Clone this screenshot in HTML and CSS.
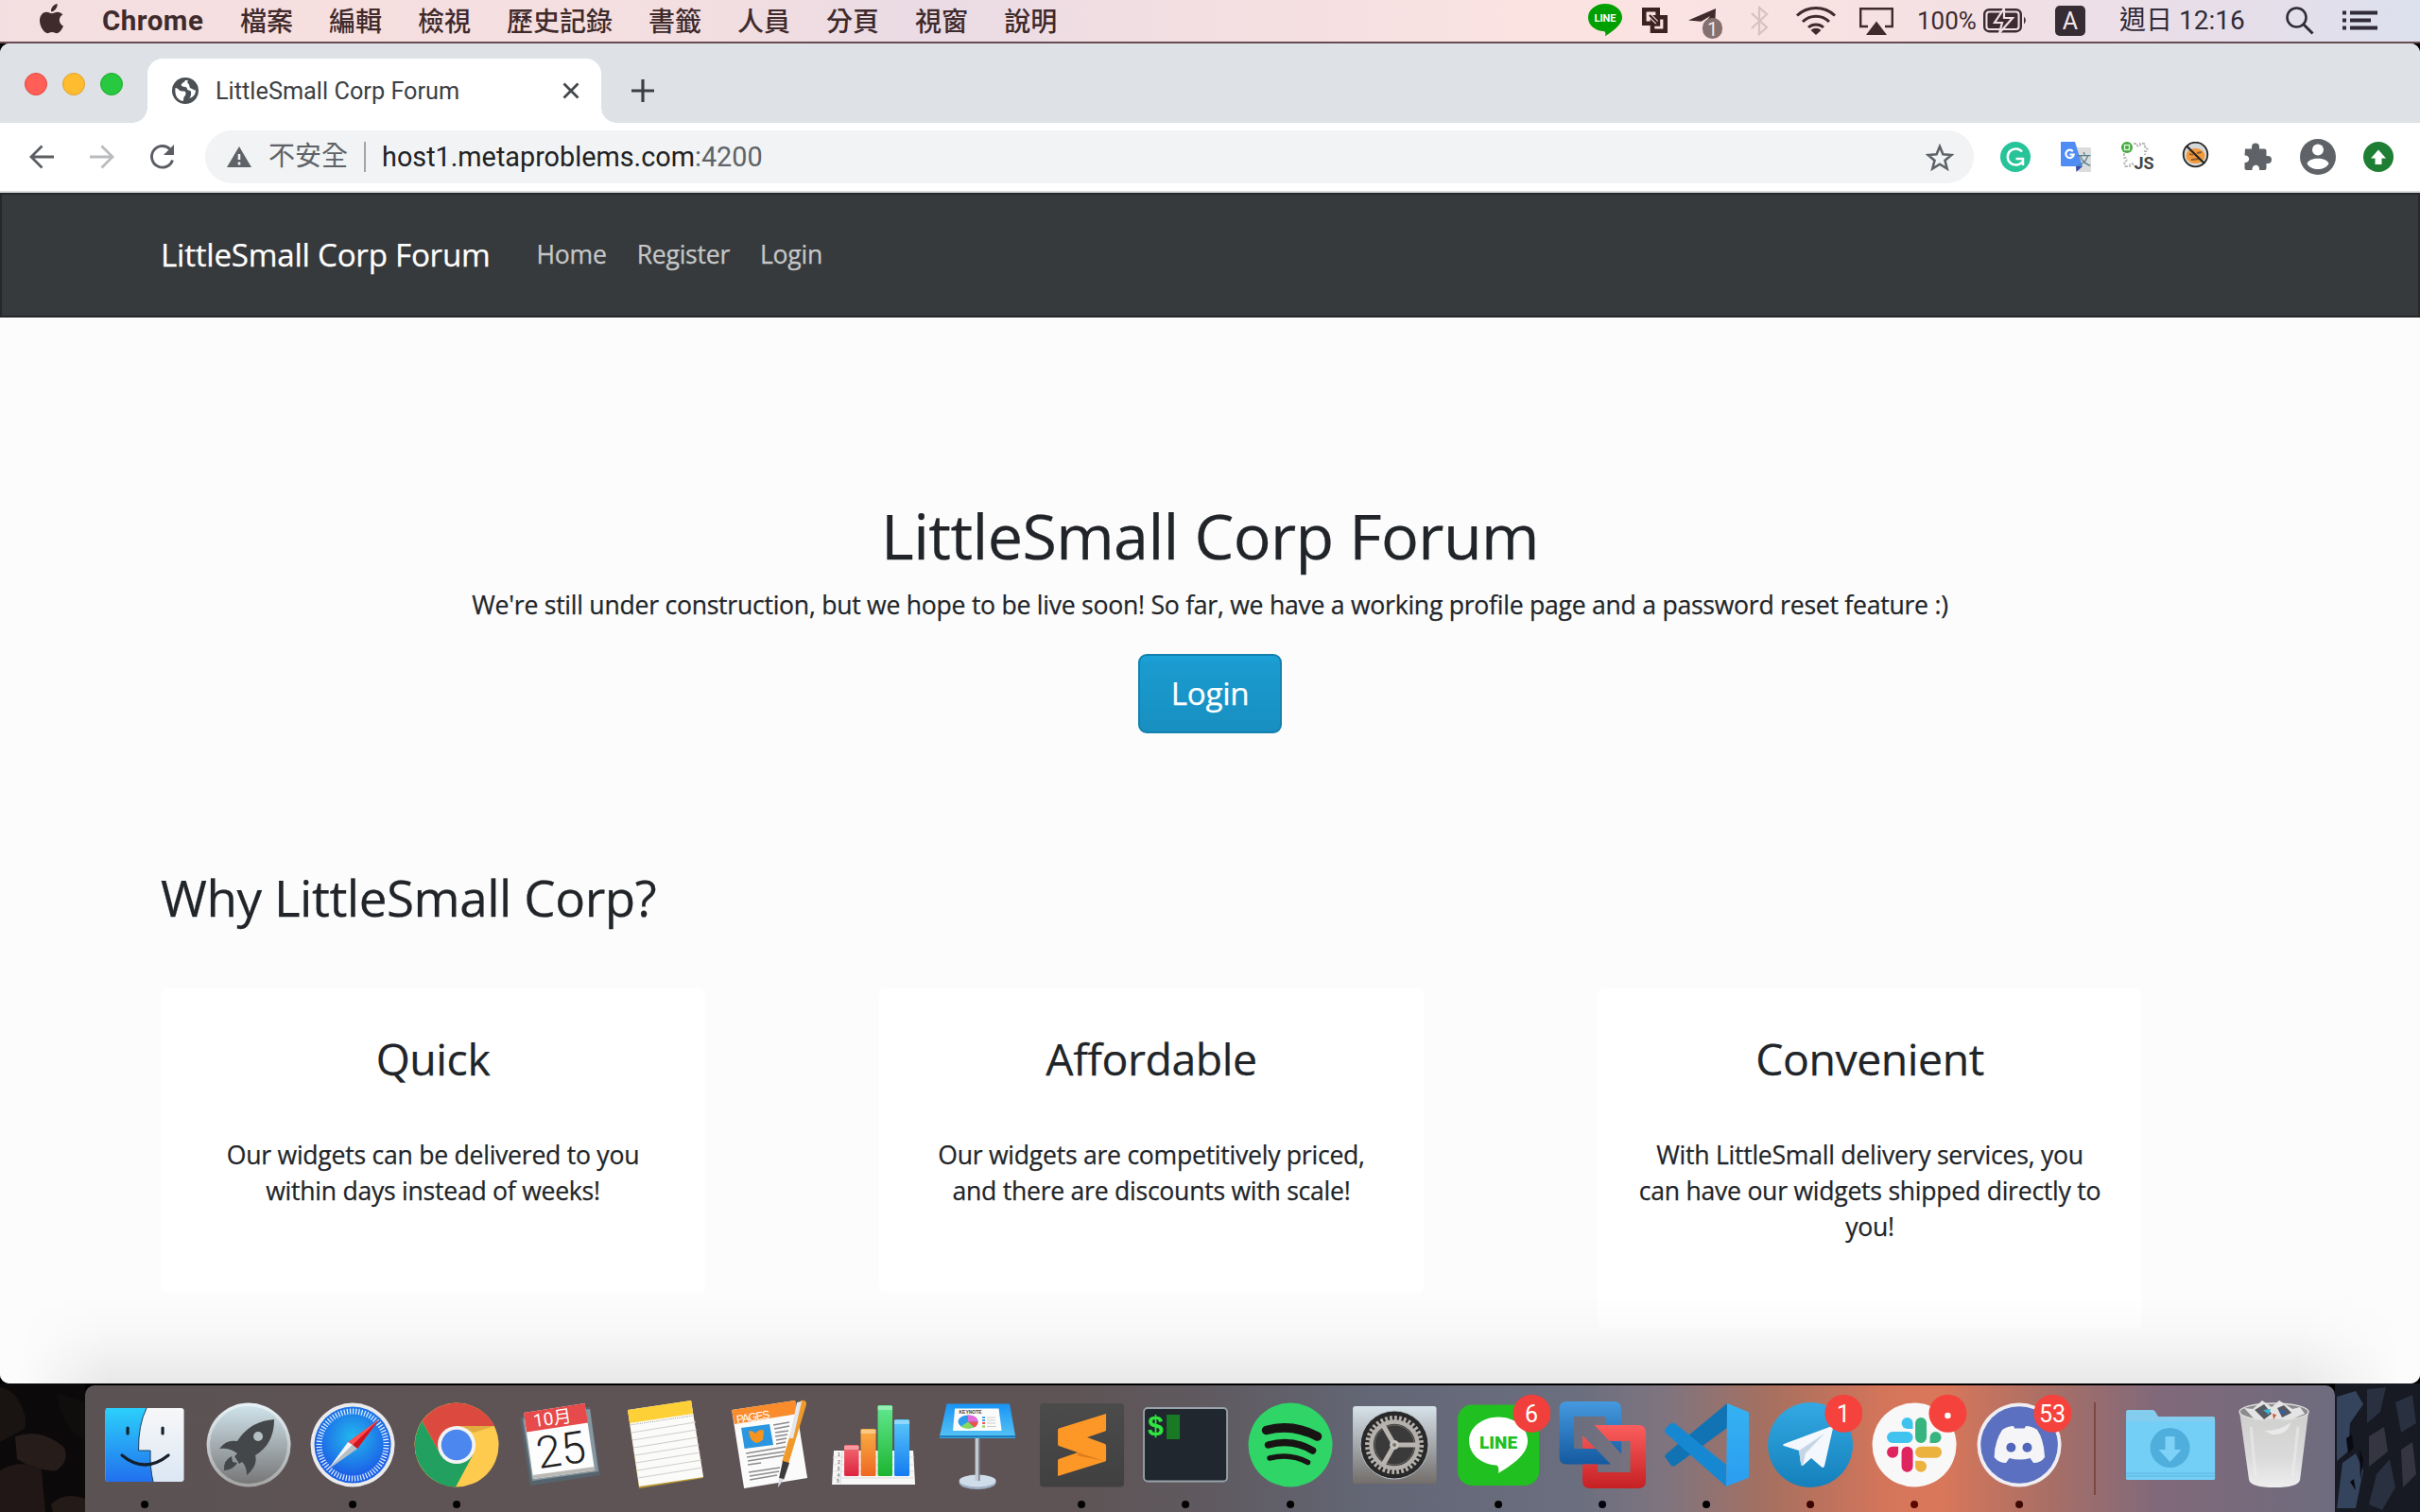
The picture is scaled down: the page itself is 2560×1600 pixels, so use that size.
FILE: index.html
```html
<!DOCTYPE html>
<html lang="zh-Hant">
<head>
<meta charset="utf-8">
<title>LittleSmall Corp Forum</title>
<link rel="stylesheet" href="styles.css">
</head>
<body>
<div class="desktop">

  <header class="menubar">
    <nav class="menus">
      <svg class="apple" width="28" height="34" viewBox="0 0 28 34"><path d="M19.6 1c.3 2.600-.7 4.500-2 6-1.400 1.500-3 2.400-4.600 2.300-.2-2.300.7-4.300 2-5.700C16.300 2.100 18.200 1.200 19.600 1zM26 24.500c-1.500 3.900-4.200 7.700-7 7.700-1.900 0-2.700-1.100-4.900-1.100-2.300 0-3.200 1.100-4.900 1.100C6.200 32.200 1 25.600 1 18.800c0-5.600 3.500-9 7.300-9 2.200 0 3.900 1.400 5.600 1.400 1.600 0 3.400-1.500 6.100-1.500 1.800 0 4 .9 5.300 2.900-5 3-4.300 9.800.7 11.900z" fill="#3f2a2c"/></svg>
      <b class="app">Chrome</b>
      <span>檔案</span><span>編輯</span><span>檢視</span><span>歷史記錄</span><span>書籤</span><span>人員</span><span>分頁</span><span>視窗</span><span>說明</span>
    </nav>
    <div class="status">
      <svg class="s-line" width="36" height="36" viewBox="0 0 36 36"><path d="M18 0c10 0 18 6.300 18 14.500 0 6-6 12-18 19.700.6-2.500.6-4-.8-5C7.500 28.700 0 23 0 14.500 0 6.300 8 0 18 0z" fill="#00a000"/><text x="18" y="18.500" class="line-sm">LINE</text></svg>
      <svg class="s-vm" width="30" height="32" viewBox="0 0 30 32"><path d="M3.300 4.300h14.400v14.400H3.300zM12 12.300h13.700v14.400H12z" fill="none" stroke="#3c2220" stroke-width="4.600"/><path d="M7 8l14 14" stroke="#fae3e1" stroke-width="4.500"/><path d="M9 10l10 10m0-7v7.500h-7.500" fill="none" stroke="#3c2220" stroke-width="2.400"/></svg>
      <svg class="s-tg" width="38" height="36" viewBox="0 0 38 36"><path d="M0 14.500L29 2l-1 20-12-6z" fill="#3f2a2c"/><path d="M10 18l13-8-9 12z" fill="#fae3e1"/><rect x="15" y="12" width="21" height="22" rx="10" fill="#857070"/><text x="25.500" y="30.500" class="one">1</text></svg>
      <svg class="s-bt" width="20" height="32" viewBox="0 0 20 32"><path d="M1 8l16 15-8 7V2l8 7L1 24" fill="none" stroke="#d9c1c2" stroke-width="2.200"/></svg>
      <svg class="s-wifi" width="44" height="32" viewBox="0 0 44 32"><g fill="none" stroke="#3f2a2c" stroke-width="3"><path d="M2 10.500a29 29 0 0 1 40 0"/><path d="M8 17a20 20 0 0 1 28 0"/><path d="M14 23a12 12 0 0 1 16 0"/></g><path d="M22 31l-5.500-5a8 8 0 0 1 11 0z" fill="#3f2a2c"/></svg>
      <svg class="s-air" width="36" height="30" viewBox="0 0 36 30"><path d="M9 20H1.200V1.200h33.600V20H27" fill="none" stroke="#3f2a2c" stroke-width="2.400"/><path d="M18 14.500L29 29H7z" fill="#3f2a2c"/></svg>
      <span class="pct">100%</span>
      <svg class="s-bat" width="48" height="26" viewBox="0 0 48 26"><rect x="1.200" y="1.200" width="38.600" height="23" rx="5" fill="none" stroke="#3c2b30" stroke-width="2.400"/><rect x="4.500" y="4.500" width="32" height="16.500" rx="2" fill="#3c2b30"/><path d="M43 8.500q3.500 4 0 8z" fill="#3c2b30"/><path d="M22 0L12 15h8l-3 11L31 10h-9z" fill="#3c2b30" stroke="#f1dfe3" stroke-width="2.200"/></svg>
      <span class="ime">A</span>
      <span class="clock">週日&nbsp;12:16</span>
      <svg class="s-find" width="30" height="30" viewBox="0 0 30 30"><circle cx="11.500" cy="11.500" r="10" fill="none" stroke="#302b38" stroke-width="2.600"/><path d="M18.500 18.500l10 10" stroke="#302b38" stroke-width="3"/></svg>
      <svg class="s-list" width="38" height="22" viewBox="0 0 38 22"><path d="M0 2.500h4M8 2.500h29M0 10.500h4M8 10.500h22M0 18.500h4M8 18.500h29" stroke="#302b38" stroke-width="4"/></svg>
    </div>
  </header>

  <main class="window">
    <div class="tabstrip">
      <div class="lights"><i class="red"></i><i class="amber"></i><i class="green"></i></div>
      <div class="tab">
        <svg width="28" height="28" viewBox="0 0 28 28"><circle cx="14" cy="14" r="14" fill="#4b5055"/><path d="M3.500 11c3 0 4 3.500 7 3.500s4 0 4 2.500-1.500 2.500-2 4 0 2.500-1 4C6 24 2.500 19 3.500 11zM14 3c-1 2.500-3 2-4 4s1.500 3 4 3 1 3 3.500 3.500 3 1.500 2.500 4.500-1 3-2 4c5-1 7-5 7-8.500-2.500 0-3-1.500-5-2s-1-3-2.500-4.500S16 4.500 17 3z" fill="#fff"/></svg>
        <span class="tab-title">LittleSmall Corp Forum</span>
        <svg width="18" height="18" viewBox="0 0 18 18"><path d="M1.500 1.500l15 15m0-15l-15 15" stroke="#43474b" stroke-width="2.800"/></svg>
      </div>
      <svg class="newtab" width="26" height="26" viewBox="0 0 26 26"><path d="M13 1v24M1 13h24" stroke="#3c4043" stroke-width="3.200"/></svg>
    </div>

    <div class="toolbar">
      <svg class="nav-ico" width="28" height="28" viewBox="0 0 28 28"><path d="M27 14H4M14.500 2.500L3 14l11.500 11.500" fill="none" stroke="#5a5e63" stroke-width="2.800"/></svg>
      <svg class="nav-ico" width="28" height="28" viewBox="0 0 28 28"><path d="M1 14h23M13.500 2.500L25 14 13.500 25.500" fill="none" stroke="#babcbe" stroke-width="2.800"/></svg>
      <svg class="nav-ico" width="28" height="28" viewBox="0 0 28 28"><path d="M24.500 17.500A11.300 11.300 0 1 1 22 6" fill="none" stroke="#5a5e63" stroke-width="2.900"/><path d="M26 1v11H15z" fill="#5a5e63"/></svg>
      <div class="omnibox">
        <svg width="26" height="22" viewBox="0 0 26 22"><path d="M13 0l13 22H0z" fill="#5f6368"/><path d="M13 8v6m0 2.500v3" stroke="#f1f3f4" stroke-width="2.600"/></svg>
        <span class="insecure">不安全</span>
        <span class="rule"></span>
        <span class="url">host1.metaproblems.com<em>:4200</em></span>
        <svg class="star" width="30" height="29" viewBox="0 0 30 29"><path d="M15 3l3.400 8.300 9 .7-6.900 5.800 2.200 8.700L15 21.700 7.300 26.500l2.200-8.700L2.600 12l9-.7z" fill="none" stroke="#5f6368" stroke-width="2.600"/></svg>
      </div>
      <div class="exts">
        <svg width="32" height="32" viewBox="0 0 32 32"><circle cx="16" cy="16" r="16" fill="#27c399"/><path d="M23 10.500a8.600 8.600 0 1 0 0 11M16.500 18H24v7" fill="none" stroke="#fff" stroke-width="2.500"/></svg>
        <svg width="32" height="32" viewBox="0 0 32 32"><path d="M10 6h21q1 0 1 1v24q0 1-1 1H19z" fill="#dcdcdc"/><path d="M16 26h7l-6.500 6z" fill="#3749ab"/><path d="M1 0h14l8 26H1q-1 0-1-1V1q0-1 1-1z" fill="#4f8df5"/><path d="M12.800 10.200a4.200 4.200 0 1 0 .9 3.300H9.500" fill="none" stroke="#fff" stroke-width="2.200"/><text x="24.500" y="24" class="wen">文</text></svg>
        <svg width="32" height="32" viewBox="0 0 32 32"><path d="M13 2h4c-1 4 4 4 3 0h5v5c4-1 4 4 0 3v4M3 12v5c4-1 4 4 0 4l1 5h5c-1-4 4-4 4 0" fill="none" stroke="#b8b8b8" stroke-width="1.800" stroke-dasharray="3 1.500"/><circle cx="6" cy="6" r="6" fill="#43a63c"/><rect x="3.500" y="3.500" width="5" height="5" fill="none" stroke="#d7f5d3" stroke-width="1.500"/><text x="24" y="29" class="js">JS</text></svg>
        <svg width="32" height="32" viewBox="0 0 32 32"><circle cx="14.500" cy="13.500" r="12.800" fill="#d5d7d8" stroke="#222" stroke-width="1.800"/><ellipse cx="14.500" cy="15" rx="10" ry="8" fill="#f39a3c"/><path d="M8 13l4 1M16 12l5-1M10 19l9-1" stroke="#8d5f30" stroke-width="1.800"/><path d="M5 4.500l19 18.500" stroke="#222" stroke-width="2.200"/></svg>
        <svg width="32" height="32" viewBox="0 0 32 32"><path d="M3 7.500h7V5.500a4 4 0 0 1 8 0v2h5.500q2 0 2 2V15h1.500a4 4 0 0 1 0 8h-1.500v5q0 2-2 2H18c1-7-8-7-7.500 0H4.500q-2 0-2-2v-6c6 .5 6.500-8 0-7.500z" fill="#5f6368"/></svg>
        <svg width="38" height="38" viewBox="0 0 38 38"><circle cx="19" cy="19" r="19" fill="#5f6368"/><circle cx="19" cy="11.500" r="6" fill="#fff"/><path d="M7.500 26c2.500-7 20.500-7 23 0-4 8-19 8-23 0z" fill="#fff"/></svg>
        <svg width="32" height="32" viewBox="0 0 32 32"><circle cx="16" cy="16" r="16" fill="#1e7e34"/><path d="M16 8.500l8 9h-4.500V24h-7v-6.500H8z" fill="#fff"/></svg>
      </div>
    </div>

    <div class="page">
      <nav class="navbar"><a class="brand">LittleSmall Corp Forum</a><a>Home</a><a>Register</a><a>Login</a></nav>
      <section class="hero">
        <h1>LittleSmall Corp Forum</h1>
        <p>We're still under construction, but we hope to be live soon! So far, we have a working profile page and a password reset feature :)</p>
        <a class="btn">Login</a>
      </section>
      <section class="why">
        <h2>Why LittleSmall Corp?</h2>
        <div class="cards">
          <article class="card"><h3>Quick</h3><p>Our widgets can be delivered to you within days instead of weeks!</p></article>
          <article class="card"><h3>Affordable</h3><p>Our widgets are competitively priced, and there are discounts with scale!</p></article>
          <article class="card"><h3>Convenient</h3><p>With LittleSmall delivery services, you can have our widgets shipped directly to you!</p></article>
        </div>
      </section>
      <div class="dock-shade"></div>
    </div>
  </main>

  <footer class="shelf">
    <svg class="rocks" width="90" height="136" viewBox="0 0 90 136"><rect width="90" height="136" fill="#0b0909"/><path d="M0 4q14 2 22 18t4 26L0 62z" fill="#191312"/><path d="M16 56q28-10 52 12 6 14-8 24-20 2-42-12z" fill="#261c19"/><path d="M0 92q24-14 44 0l4 44H0z" fill="#201716"/><path d="M54 128q14-14 36-6v14H56z" fill="#241a17"/><path d="M60 10l30 10v40q-24-10-30-50z" fill="#100d0d"/></svg>

    <div class="dock">
      <svg class="tile" viewBox="0 0 110 134">
        <defs><linearGradient id="fb" x1="0" y1="0" x2="0" y2="1"><stop offset="0" stop-color="#2bd0fb"/><stop offset="1" stop-color="#2270ee"/></linearGradient><linearGradient id="fw" x1="0" y1="0" x2="0" y2="1"><stop offset="0" stop-color="#f7f7f8"/><stop offset="1" stop-color="#dbe7f4"/></linearGradient></defs>
        <rect x="13.500" y="24" width="83" height="78" rx="3" fill="url(#fw)"/><path d="M16.500 24H57Q48 42 48.500 69H61Q60.500 88 64 102H16.500q-3 0-3-3V27q0-3 3-3z" fill="url(#fb)"/><path d="M57 24Q48 42 48.500 69H61Q60.500 88 64 102" fill="none" stroke="#1b3d60" stroke-width="1"/><path d="M37 45v6M74 45v6M31 74q24 20 49 0" fill="none" stroke="#14202c" stroke-width="3.200" stroke-linecap="round"/><circle cx="55" cy="126" r="4"/>
      </svg>
      <svg class="tile" viewBox="0 0 110 134">
        <defs><linearGradient id="lp" x1="0" y1="0" x2="0" y2="1"><stop offset="0" stop-color="#cfe2ea"/><stop offset="1" stop-color="#777"/></linearGradient><linearGradient id="lr" x1="0" y1="0" x2="0" y2="1"><stop offset="0" stop-color="#e8f4f8"/><stop offset="1" stop-color="#a3a3a3"/></linearGradient></defs>
        <circle cx="55" cy="63" r="44.500" fill="url(#lr)"/><circle cx="55" cy="63" r="41" fill="url(#lp)"/><path d="M82 36Q82 62 62 74q3 11-9 21 0-9-5-14l-3 2-5-8 3-3q-8-6-19-5 7-10 19-8Q56 38 82 36z" fill="#43474a"/><path d="M29 90q-1-11 8-15l1 6 5 1q-4 7-14 8z" fill="#43474a"/><circle cx="65" cy="54" r="5" fill="#b4c0c4"/>
      </svg>
      <svg class="tile" viewBox="0 0 110 134">
        <defs><radialGradient id="sf" cy=".4"><stop offset="0" stop-color="#22b9ee"/><stop offset="1" stop-color="#1c60e6"/></radialGradient></defs>
        <circle cx="55" cy="63" r="44.500" fill="#ebebeb"/><circle cx="55" cy="63" r="40.500" fill="url(#sf)"/><circle cx="55" cy="63" r="35.500" fill="none" stroke="#dff0ff" stroke-width="6" pathLength="144" stroke-dasharray=".8 1.200"/><path d="M83 36L50 60l5 3 5 4z" fill="#ff4e50"/><path d="M83 36L55 63l5 4z" fill="#cf1420"/><path d="M29 89L50 60l5 3z" fill="#f4f4f4"/><path d="M29 89l26-26 5 4z" fill="#b9bfc4"/><circle cx="55" cy="126" r="4"/>
      </svg>
      <svg class="tile" viewBox="0 0 110 134">
        <circle cx="55" cy="63" r="44.500" fill="#fecb4f"/><path d="M18.500 38A44.500 44.500 0 0 0 54 107.500L72.500 73 55 80 38 73z" fill="#22a05f"/><path d="M18.500 38A44.500 44.500 0 0 1 95 43H55L38 73z" fill="#dc4a3f"/><path d="M57 43h38l-22 7z" fill="#d5a03a" opacity=".7"/><circle cx="55" cy="63" r="20" fill="#f3f3f3"/><circle cx="55" cy="63" r="16.300" fill="#4b87ef"/><circle cx="55" cy="126" r="4"/>
      </svg>
      <svg class="tile" viewBox="0 0 110 134">
        <path d="M11 34l74-11 11 72-74 11z" fill="#56646d"/><path d="M14 35l71-10 9 66-70 10z" fill="#8797a0"/><path d="M15 29l64.500-10L90 90l-65 9z" fill="#fdfdfd"/><path d="M24.500 95L90 86v4l-65 9z" fill="#bbb9b5"/><path d="M15 29l64.500-10L83 39.500 18 49.500z" fill="#e64a4a"/><g transform="rotate(-8.500 50 60)"><text x="49" y="41" class="cal-m">10月</text><text x="53" y="85" class="cal-d">25</text></g>
      </svg>
      <svg class="tile" viewBox="0 0 110 134">
        <path d="M15 27l67-10 13 81-68 11z" fill="#b99a35"/><path d="M15 26l67-10 13 81-68 10z" fill="#fbfbf9"/><path d="M15 26l67-10 2 14-67 10z" fill="#fdd037"/><path d="M17 42l67-10" stroke="#999" stroke-dasharray="1 1.200"/><path d="M19 50l68-11M20 58l68-11M21 66l68-11M22.500 74l68-11M23.500 82l68-11M25 90l68-11M26 98l68-11" stroke="#cfcfcf" stroke-width="1.200"/>
      </svg>
      <svg class="tile" viewBox="0 0 110 134">
        <path d="M15 26l67-10 13 82-67 11z" fill="#fbfbfb"/><path d="M15 26l67-10 3 14-67 11z" fill="#fb8c2c"/><text x="37" y="37.500" transform="rotate(-9 37 33)" class="pages">PAGES</text><path d="M25 45l30-4 4 22-30.500 4z" fill="#2b96e0"/><path d="M33 48q5 0 7 3 5-6 9-3l-1 9q-3 4-7 4-7-2-8-13z" fill="#f7941e"/><path d="M59 42l17-3M60 46l16-3M61 50l14-2M61 54l13-2M62 58l11-2M62 62l10-2M30 72l42-7M31 76l40-6M32 80l38-6M32 84l14-2M33 92l33-5M34 96l31-5M34 100l29-5" stroke="#8c8c8c" stroke-width="1.300"/><path d="M88 16q6-1 6 4L75 83l-7-2z" fill="#f09a2c"/><path d="M84 18l5-1-9 39h-4z" fill="#e3e8ee"/><path d="M69 80l7 2-6 18-5-2z" fill="#3c3c3c"/><path d="M65 98l5 1-6 9z" fill="#d5dce2"/>
      </svg>
      <svg class="tile" viewBox="0 0 110 134">
        <defs><linearGradient id="n1" x1="0" y1="0" x2="0" y2="1"><stop offset="0" stop-color="#f46a72"/><stop offset="1" stop-color="#dc2440"/></linearGradient><linearGradient id="n2" x1="0" y1="0" x2="0" y2="1"><stop offset="0" stop-color="#f9b044"/><stop offset="1" stop-color="#ee6722"/></linearGradient><linearGradient id="n3" x1="0" y1="0" x2="0" y2="1"><stop offset="0" stop-color="#62e88f"/><stop offset="1" stop-color="#1cb531"/></linearGradient><linearGradient id="n4" x1="0" y1="0" x2="0" y2="1"><stop offset="0" stop-color="#5ac8fa"/><stop offset="1" stop-color="#137bf0"/></linearGradient></defs>
        <path d="M13 69h84l2 36H11z" fill="#f8f8f8"/><path d="M22 69l-2 36M12 76h86M12 84h86M12 91h86M11 98h88" stroke="#ddd" fill="none"/><g class="rows"><text x="17" y="75">1</text><text x="17" y="82.500">2</text><text x="16.500" y="90">3</text><text x="16.500" y="97">4</text><text x="16" y="103">5</text></g><rect x="24" y="63" width="15.500" height="33" rx="1.500" fill="url(#n1)"/><rect x="41.500" y="46" width="16" height="50" rx="1.500" fill="url(#n2)"/><rect x="59.500" y="21" width="15.500" height="75" rx="1.500" fill="url(#n3)"/><rect x="77" y="36" width="16" height="60" rx="1.500" fill="url(#n4)"/><path d="M24 66h15.500M41.500 49h16M59.500 24H75M77 39h16" stroke="#fff" stroke-opacity=".35" stroke-width="4"/>
      </svg>
      <svg class="tile" viewBox="0 0 110 134">
        <defs><linearGradient id="kn" x1="0" y1="0" x2="0" y2="1"><stop offset="0" stop-color="#1994f5"/><stop offset="1" stop-color="#58c5f5"/></linearGradient></defs>
        <ellipse cx="55" cy="103" rx="19.500" ry="7" fill="#9eafc0"/><ellipse cx="55" cy="101" rx="19.500" ry="6.500" fill="#cfdcea"/><path d="M52.500 55H57v46h-4.500z" fill="#c2c9d0"/><path d="M56 55h1.500v46H56z" fill="#77808a"/><path d="M22.500 19.500H89l6 34v2.500H15v-2.500z" fill="url(#kn)"/><path d="M15 53h80v2.500H15z" fill="#1d7fc0"/><path d="M31 24.500h46.500l3 23.500H29z" fill="#fbfbfb"/><text x="47.500" y="29.500" class="keynote">KEYNOTE</text><ellipse cx="45" cy="38.500" rx="10.500" ry="7" fill="#2d9bea"/><path d="M45 38.500V31.500q10 0 10.500 7z" fill="#e66ad6"/><path d="M45 38.500h10.500q0 4-4 6z" fill="#f05050"/><path d="M45 38.500l6.500 6q-8 3-14-1z" fill="#86d95d"/><path d="M60 34h3M60 37h3" stroke="#4aa3ee" stroke-width="2"/><path d="M60 40h3" stroke="#e55" stroke-width="2"/><path d="M60 43.500h3" stroke="#8c5" stroke-width="2"/><path d="M65 34h9M65 37h9M65 40h9M65 43.500h10" stroke="#ccc"/>
      </svg>
      <svg class="tile" viewBox="0 0 110 134">
        <defs><linearGradient id="sb" x1="0" y1="0" x2="0" y2="1"><stop offset="0" stop-color="#4b4b4b"/><stop offset="1" stop-color="#404040"/></linearGradient></defs>
        <rect x="11" y="19" width="89" height="88.500" rx="4" fill="url(#sb)"/><path d="M81 30L31 45.500q-1 .5-1 1.500V62q0 1.500 1 2l20 7-20 7q-1 .5-1 1.500V96l50-15.500q1-.5 1-1.500V64q0-1.500-1-2l-19-7 19-6.500q1-.5 1-1.500z" fill="#fd9827"/><path d="M51 71l28 9-28-5.500z" fill="#df7f1c"/><circle cx="55" cy="126" r="4"/>
      </svg>
      <svg class="tile" viewBox="0 0 110 134">
        <rect x="11" y="24" width="88" height="77.500" rx="4" fill="#20272e" stroke="#99a3ab" stroke-width="1.800"/><text x="23.500" y="53" class="dollar">$</text><rect x="35" y="31" width="14" height="26" fill="#187a24"/><circle cx="55" cy="126" r="4"/>
      </svg>
      <svg class="tile" viewBox="0 0 110 134">
        <circle cx="55" cy="63" r="44.500" fill="#2fd566"/><g fill="none" stroke="#191414" stroke-linecap="round"><path d="M29.500 47.500Q57 40 83.500 54" stroke-width="9.500"/><path d="M31.500 63Q57 56 78.500 69" stroke-width="7.500"/><path d="M33 77Q55 71.500 73.500 81.500" stroke-width="5.500"/></g><circle cx="55" cy="126" r="4"/>
      </svg>
      <svg class="tile" viewBox="0 0 110 134">
        <defs><linearGradient id="sp" x1="0" y1="0" x2="0" y2="1"><stop offset="0" stop-color="#d6e2ea"/><stop offset="1" stop-color="#736e6b"/></linearGradient></defs>
        <rect x="11" y="22" width="88.500" height="82" rx="3" fill="url(#sp)"/><circle cx="55" cy="63" r="36" fill="#282828" stroke="#b7c0c8"/><circle cx="55" cy="63" r="28.500" fill="none" stroke="#b4b0ac" stroke-width="5" pathLength="72" stroke-dasharray="1.100 .9"/><circle cx="55" cy="63" r="24.500" fill="#3a3a3a" stroke="#b4b0ac" stroke-width="4.500"/><circle cx="55" cy="63" r="21" fill="none" stroke="#6a6866"/><path d="M55 63h24M55 63L43 42M55 63L43 84" stroke="#b9b5b1" stroke-width="5"/><circle cx="55" cy="63" r="5" fill="#c6c2be"/><circle cx="55" cy="63" r="2" fill="#77736f"/>
      </svg>
      <svg class="tile" viewBox="0 0 110 134">
        <rect x="12" y="20.500" width="86" height="85.500" rx="15" fill="#20c020"/><path d="M55 33.500c17 0 31 11 31 25 0 13-12 23-31 34.500.8-4 0-7.500-2-8.500-17-1-29-12-29-26 0-14 14-25 31-25z" fill="#fff"/><text x="55" y="66.500" class="line-lg">LINE</text><circle cx="55" cy="126" r="4"/><circle cx="90.400" cy="29.700" r="20" fill="#f13f3b"/><text x="90" y="38.500" class="badge">6</text>
      </svg>
      <svg class="tile" viewBox="0 0 110 134">
        <defs><linearGradient id="vb" gradientUnits="userSpaceOnUse" x1="0" y1="17" x2="0" y2="84"><stop offset="0" stop-color="#4599de"/><stop offset="1" stop-color="#1459a0"/></linearGradient><linearGradient id="vr" gradientUnits="userSpaceOnUse" x1="0" y1="42" x2="0" y2="109"><stop offset="0" stop-color="#fb5e5e"/><stop offset="1" stop-color="#c62023"/></linearGradient></defs>
        <path d="M17.500 17H67q8 0 8 8v17H59v-9H25v34h23l16 16.500H17.500q-8 0-8-8V25q0-8 8-8zM62.500 59H75v13.500z" fill="url(#vb)"/><path d="M46.500 42H93q8 0 8 8v51q0 8-8 8H42q-8 0-8-8V83.500h16V92h34.500V59h-22zM34 53v14h14z" fill="url(#vr)"/><circle cx="55" cy="126" r="4" fill="#020212"/>
      </svg>
      <svg class="tile" viewBox="0 0 110 134">
        <defs><linearGradient id="vs" x1="0" y1="0" x2="0" y2="1"><stop offset="0" stop-color="#35b2f2"/><stop offset="1" stop-color="#2b9df0"/></linearGradient></defs>
        <path d="M77 19L12 73q-2 2 0 4l6 8q2 1.500 4 0l55-40z" fill="#1173b4"/><path d="M22 40.500q-3-1.500-5 0l-5 5q-2 3 0 5L76 107V84z" fill="#1688d2"/><path d="M77 19l22 9q1 .5 1 2v66q0 1.500-1 2l-23 9z" fill="url(#vs)"/><circle cx="55" cy="126" r="4"/>
      </svg>
      <svg class="tile" viewBox="0 0 110 134">
        <defs><linearGradient id="tg" x1="0" y1="0" x2="0" y2="1"><stop offset="0" stop-color="#33a9e3"/><stop offset="1" stop-color="#1480bb"/></linearGradient></defs>
        <circle cx="55" cy="63" r="45" fill="url(#tg)"/><path d="M27 62l51-19q1 0 1 2L70 85q-1 3-3 1.500L56 77l-9 8q-2 0-2-2l-2-14-16-5q-2-1 0-2z" fill="#f4f8fc"/><path d="M43 69l27-18-20 21-3 13q-2 0-2-2z" fill="#c4d6e6"/><circle cx="55" cy="126" r="4" fill="#3a0502"/><circle cx="90.400" cy="29.700" r="20" fill="#f6423c"/><text x="90" y="38.500" class="badge">1</text>
      </svg>
      <svg class="tile" viewBox="0 0 110 134">
        <circle cx="55" cy="63" r="44.500" fill="#f8f8f8"/><g fill="#40c4ef"><rect x="26" y="49" width="27.500" height="12" rx="6"/><path d="M53.500 46h-6a6 6 0 1 1 6-6z"/></g><g fill="#36b57f"><rect x="56" y="34" width="12" height="27" rx="6"/><path d="M71.500 61v-6a6 6 0 1 1 6 6z"/></g><g fill="#df2460"><rect x="41.500" y="64.700" width="12" height="27" rx="6"/><path d="M38 64.700v6a6 6 0 1 1-6-6z"/></g><g fill="#ecb23e"><rect x="56" y="64.700" width="28" height="12" rx="6"/><path d="M56 79.700h6a6 6 0 1 1-6 6z"/></g><circle cx="55" cy="126" r="4" fill="#5c0802"/><circle cx="90.400" cy="29.700" r="20" fill="#f6423c"/><circle cx="90.400" cy="32" r="3.200" fill="#fff"/>
      </svg>
      <svg class="tile" viewBox="0 0 110 134">
        <circle cx="55" cy="63" r="44.500" fill="#f0eef2"/><circle cx="55" cy="63" r="40.800" fill="#5b70c0"/><path d="M37 47q6-4 12-4l1 2.500h10.500L62 43q6 0 12 4 7 10 8 29-4 6-12 6l-3.500-5q-11 3-22 0L41 82q-8 0-12.500-6Q29 59 37 47z" fill="#f5f5f8"/><circle cx="46.300" cy="65.700" r="5" fill="#5167b9"/><circle cx="63.400" cy="65.700" r="5" fill="#5167b9"/><circle cx="55" cy="126" r="4" fill="#3d0804"/><circle cx="90.400" cy="29.700" r="20" fill="#f6423c"/><text x="90" y="38.500" class="badge">53</text>
      </svg>
      <div class="divider"></div>
      <svg class="tile" viewBox="0 0 110 134">
        <path d="M10 26h26q2 0 3 2l3 5h58q2 0 2 2v63q0 2-2 2H10q-2 0-2-2V28q0-2 2-2z" fill="#85cdee"/><path d="M8 38h94v60q0 2-2 2H10q-2 0-2-2z" fill="#74cff7"/><path d="M8 93h94M8 96h94" stroke="#5db4dc"/><circle cx="54.500" cy="66" r="21" fill="#4faedb"/><path d="M49.500 54h10v14h7L54.500 81l-12-13h7z" fill="#7ed2f8"/>
      </svg>
      <svg class="tile" viewBox="0 0 110 134">
        <defs><linearGradient id="tr" x1="0" y1="0" x2="0" y2="1"><stop offset="0" stop-color="#cfcfce"/><stop offset=".6" stop-color="#dadada"/><stop offset="1" stop-color="#eee"/></linearGradient></defs>
        <path d="M18 28h73l-9 72q-2 8-27 8t-27-8z" fill="url(#tr)"/><ellipse cx="54.500" cy="28" rx="36.500" ry="9" fill="#8b8b8e" stroke="#ddd" stroke-width="1.500"/><path d="M23 24l9 1 10-9 10 7 8-7 14 9 8-2 5 7-14 6H34z" fill="#e4e4e4"/><path d="M34 26l10-6 8 10-8 6zM58 24l7-3 8 8-10 5z" fill="#545a60"/><path d="M43 26l8-1-2 6z" fill="#3bb5d8"/><path d="M60 28l5-3 1 6z" fill="#2f61b0"/><path d="M53 30l4 1-3 5z" fill="#d2553c"/><path d="M44 48q18 0 28-9-3 14-20 13z" fill="#f2f2f2" opacity=".7"/><path d="M30 44l5 52M80 44l-6 52" stroke="#f1f1f1" stroke-width="3" opacity=".5"/>
      </svg>
    </div>

    <svg class="rocks" width="90" height="136" viewBox="0 0 90 136"><rect width="90" height="136" fill="#171923"/><path d="M2 14l20-6 8 14-14 20-2 30-12 10zM8 84l14-10 8 18-8 40H2z" fill="#34445d"/><path d="M34 6l20-2-6 26-14 12zM64 20l18-8 4 30-16 10zM44 96l14-16 6 30-14 24-14-6z" fill="#29303f"/><path d="M36 56l16-10 4 26-20 16zM70 70l12-8 4 34-14 14z" fill="#353542"/><path d="M12 58l6-4 2 14-6 6zM16 104l4-3 2 12zM26 70l4 10-3 22z" fill="#0a0b12"/></svg>
  </footer>
</div>
</body>
</html>
```
FILE: styles.css
```css
* { box-sizing: border-box; }
body { margin: 0; background: #000; font-family: Roboto, "Noto Sans CJK TC", sans-serif; }
svg { display: block; flex: none; }
h1, h2, h3, p { margin: 0; font-weight: 400; }

.desktop { width: 2560px; height: 1600px; display: flex; flex-direction: column; overflow: hidden; background: #000; }

/* menu bar */
.menubar {
  height: 46px; flex: none; display: flex; justify-content: space-between;
  padding-left: 41px; border-bottom: 2px solid #674c53; color: #3f2a2c; font-size: 28px; line-height: 44px;
  background: linear-gradient(90deg, #f3dfe1, #f7dfdf 14%, #f2dee1 30%, #eadbe4 38%, #f3dfe2 50%, #fbe3e1 64%, #f8e2e2 76%, #e9dee8 90%, #dde0ee);
}
.menus { display: flex; align-items: center; gap: 38px; height: 44px; font-family: "Noto Sans CJK TC", sans-serif; font-weight: 500; }
.menus span { line-height: 42px; margin-top: -2px; }
.apple { margin-top: -4px; }
.app { font-family: Roboto, sans-serif; font-weight: 700; font-size: 29.500px; letter-spacing: .5px; width: 108px; margin-left: 1px; }
.status { display: flex; align-items: center; height: 44px; padding-right: 44px; }
.s-line { margin-top: -1px; }
.s-vm { margin-left: 20px; }
.s-tg { margin-left: 20px; margin-top: 6px; }
.s-bt { margin-left: 28px; }
.s-wifi { margin-left: 27px; margin-top: -1px; }
.s-air { margin-left: 24px; margin-top: 1px; }
.pct { width: 62px; margin-left: 25px; font-size: 26px; white-space: nowrap; }
.s-bat { margin-left: 8px; }
.ime { width: 32px; height: 32px; margin-left: 28px; border-radius: 5px; background: #362c33; color: #f3e6ea; font-size: 25px; line-height: 33px; text-align: center; }
.clock { width: 134px; margin-left: 36px; color: #302b38; font-size: 28px; white-space: nowrap; }
.s-find { margin-left: 42px; }
.s-list { margin-left: 30px; }
.line-sm { font: 700 11px Roboto, sans-serif; fill: #fff; text-anchor: middle; }
.one { font: 20px Roboto, sans-serif; fill: #f6e6e6; text-anchor: middle; }

/* browser window */
.window { height: 1418px; flex: none; display: flex; flex-direction: column; border-radius: 10px; overflow: hidden; background: #fff; }
.tabstrip { height: 84px; flex: none; display: flex; background: #dee1e6; padding-left: 26px; }
.lights { display: flex; gap: 16px; width: 130px; padding-top: 31px; }
.lights i { width: 24px; height: 24px; border-radius: 50%; }
.red { background: #ff5f57; border: 1px solid #e2463f; }
.amber { background: #febc2e; border: 1px solid #e0a028; }
.green { background: #28c840; border: 1px solid #1dad2b; }
.tab { position: relative; display: flex; align-items: center; width: 480px; height: 68px; margin-top: 16px; padding: 0 23px 0 26px; background: #fff; border-radius: 16px 16px 0 0; }
.tab::before, .tab::after { content: ""; position: absolute; bottom: 0; width: 16px; height: 16px; }
.tab::before { left: -16px; background: radial-gradient(circle at 0 0, transparent 15.500px, #fff 16px); }
.tab::after { right: -16px; background: radial-gradient(circle at 100% 0, transparent 15.500px, #fff 16px); }
.tab-title { flex: 1; margin-left: 18px; font-size: 25.300px; color: #3c4043; white-space: nowrap; }
.newtab { margin: 37px 0 0 31px; }

.toolbar { height: 74px; flex: none; display: flex; align-items: center; padding: 0 12px 0 30px; border-bottom: 2px solid #d9dbdc; }
.nav-ico { margin-right: 36px; }
.omnibox { display: flex; align-items: center; width: 1871px; height: 56px; margin-left: -5px; padding: 0 21px 0 23px; border-radius: 28px; background: #f1f3f4; font-size: 28px; }
.insecure { margin-left: 18px; color: #5f6368; line-height: 56px; }
.rule { width: 2px; height: 32px; margin: 0 17px; background: #a3a6a9; }
.url { flex: 1; color: #202124; font-size: 28.800px; }
.url em { font-style: normal; color: #5f6368; }
.exts { display: flex; align-items: center; margin-left: 12px; }
.exts svg { width: 64px; }
.wen { font: 15px "Noto Sans CJK TC", sans-serif; fill: #55808a; text-anchor: middle; }
.js { font: 700 18px Roboto, sans-serif; fill: #444; text-anchor: middle; }

/* forum page */
.page { position: relative; flex: 1; background: #fcfcfc; color: #212529; font-family: "Open Sans", sans-serif; font-size: 26.600px; line-height: 38px; letter-spacing: -.26px; -webkit-text-stroke: .25px; }
.navbar { height: 132px; display: flex; align-items: center; padding: 0 0 3px 168px; border: 2px solid #25272a; background: #373a3c; color: #c6c7c7; }
.navbar a { margin-right: 32px; }
.navbar .brand { margin: 2px 49px 0 0; color: #fff; font-size: 33.200px; }
.hero { display: flex; flex-direction: column; align-items: center; padding-top: 190px; }
.hero h1 { font-size: 66.400px; line-height: 80px; letter-spacing: -.58px; margin-bottom: 15px; }
.hero p { white-space: nowrap; }
.btn { width: 152px; height: 84px; margin-top: 33px; border: 2px solid #1381b0; border-radius: 9px; background: linear-gradient(#1ba3d8, #1a9bd0 10%, #188fc0); color: #fff; font-size: 33.200px; line-height: 80px; text-align: center; }
.why { padding: 142px 170px 0; }
.why h2 { font-size: 53px; line-height: 64px; letter-spacing: -.47px; }
.cards { display: grid; grid-template-columns: repeat(3, 576px); column-gap: 184px; align-items: start; margin-top: 64px; }
.card { padding: 47px 40px 89px; border-radius: 7px; background: #fff; text-align: center; }
.card h3 { margin-bottom: 55px; font-size: 46.400px; line-height: 55px; letter-spacing: -.43px; }
.dock-shade { position: absolute; left: 0; right: 0; bottom: 0; height: 92px; background: linear-gradient(transparent, rgba(0,0,0,.018) 45%, rgba(0,0,0,.078)); -webkit-mask: linear-gradient(90deg, transparent 20px, #000 115px, #000 2430px, transparent 2540px); mask: linear-gradient(90deg, transparent 20px, #000 115px, #000 2430px, transparent 2540px); }

/* dock */
.shelf { height: 136px; flex: none; display: flex; background: #000; }
.dock {
  width: 2380px; height: 134px; margin-top: 2px; padding-left: 8px; display: flex; border-radius: 10px 10px 0 0;
  background: linear-gradient(90deg, #5b5254, #5f5455 20%, #5e5455 44%, #5f5a60 50%, #636675 57%, #6a6e7e 66%, #7d7480 70%, #a8705f 75%, #d4755a 80%, #d9775a 82.500%, #ab6f65 87%, #81697a 92%, #6d6c7e);
}
.tile { width: 110.150px; height: 134px; }
.divider { width: 2px; height: 98px; margin: 18px 24px 0; background: #7c4843; }
.cal-m { font: 19px Roboto, "Noto Sans CJK TC", sans-serif; fill: #fff; text-anchor: middle; }
.cal-d { font: 300 47px Roboto, sans-serif; fill: #222; text-anchor: middle; }
.pages { font: 12px "Liberation Sans", sans-serif; fill: #fff; text-anchor: middle; letter-spacing: -1.200px; }
.rows { font: 700 5px "Liberation Sans", sans-serif; fill: #777; }
.keynote { font: 700 5px "Liberation Sans", sans-serif; fill: #444; text-anchor: middle; }
.dollar { font: 700 30px "Liberation Mono", monospace; fill: #2fe53e; text-anchor: middle; }
.line-lg { font: 900 19px Roboto, sans-serif; fill: #20c020; text-anchor: middle; }
.badge { font: 25px Roboto, sans-serif; fill: #fff; text-anchor: middle; }
```
